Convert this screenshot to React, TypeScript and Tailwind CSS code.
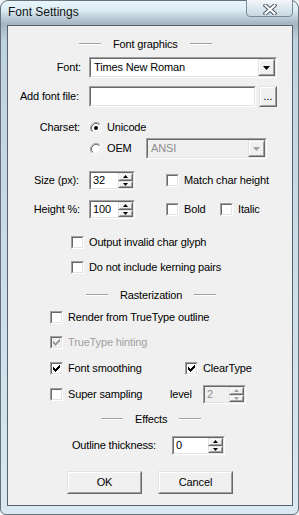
import React from "react";

const FONT = "font-['Liberation_Sans',Arial,sans-serif] text-[11px] tracking-[-0.15px] leading-none text-black";

function Sunken({ className = "", inner = "", children }: { className?: string; inner?: string; children?: React.ReactNode }) {
  return (
    <div className={`border border-t-[#a0a0a0] border-l-[#a0a0a0] border-r-white border-b-white ${className}`}>
      <div className={`h-full w-full border border-t-[#696969] border-l-[#696969] border-r-[#e3e3e3] border-b-[#e3e3e3] ${inner}`}>
        {children}
      </div>
    </div>
  );
}

function Raised({ className = "", inner = "", children }: { className?: string; inner?: string; children?: React.ReactNode }) {
  return (
    <div className={`border border-t-[#e3e3e3] border-l-[#e3e3e3] border-r-[#696969] border-b-[#696969] bg-[#f0f0f0] ${className}`}>
      <div className={`h-full w-full border border-t-white border-l-white border-r-[#a0a0a0] border-b-[#a0a0a0] flex items-center justify-center ${inner}`}>
        {children}
      </div>
    </div>
  );
}

function Down({ w = 7, color = "#000" }: { w?: number; color?: string }) {
  const h = Math.ceil(w / 2);
  return (
    <svg width={w} height={h} viewBox={`0 0 ${w} ${h}`}>
      <polygon points={`0,0 ${w},0 ${w / 2},${h}`} fill={color} />
    </svg>
  );
}
function Up({ w = 5, color = "#000" }: { w?: number; color?: string }) {
  const h = Math.ceil(w / 2);
  return (
    <svg width={w} height={h} viewBox={`0 0 ${w} ${h}`}>
      <polygon points={`0,${h} ${w},${h} ${w / 2},0`} fill={color} />
    </svg>
  );
}

function Combo({ className = "", text, disabled = false }: { className?: string; text: string; disabled?: boolean }) {
  return (
    <Sunken className={`h-[21px] ${className}`} inner={`flex ${disabled ? "bg-[#f0f0f0]" : "bg-white"}`}>
      <div className={`flex-1 flex items-center pl-[3px] ${disabled ? "text-[#8d8d8d]" : ""}`}>{text}</div>
      <Raised className="w-[17px] h-full">
        <Down w={7} color={disabled ? "#a0a0a0" : "#000"} />
      </Raised>
    </Sunken>
  );
}

function Spinner({ className = "", value, disabled = false }: { className?: string; value: string; disabled?: boolean }) {
  const c = disabled ? "#a0a0a0" : "#000";
  return (
    <Sunken className={`h-[19px] ${className}`} inner={`flex ${disabled ? "bg-[#f0f0f0]" : "bg-white"}`}>
      <div className={`flex-1 flex items-center pl-[2px] ${disabled ? "text-[#8d8d8d]" : ""}`}>{value}</div>
      <div className="w-[15px] h-full flex flex-col">
        <Raised className="flex-1 min-h-0">
          <Up w={5} color={c} />
        </Raised>
        <Raised className="flex-1 min-h-0">
          <Down w={5} color={c} />
        </Raised>
      </div>
    </Sunken>
  );
}

const CHECK = [
  "......X",
  ".....XX",
  "X...XXX",
  "XX.XXX.",
  "XXXXX..",
  ".XXX...",
  "..X....",
];

function Check({ color }: { color: string }) {
  const rects: React.ReactNode[] = [];
  CHECK.forEach((row, y) =>
    row.split("").forEach((ch, x) => {
      if (ch === "X") rects.push(<rect key={`${x}-${y}`} x={x} y={y} width={1} height={1} fill={color} />);
    })
  );
  return (
    <svg width={7} height={7} viewBox="0 0 7 7" shapeRendering="crispEdges">
      {rects}
    </svg>
  );
}

function Checkbox({ checked = false, disabled = false, className = "" }: { checked?: boolean; disabled?: boolean; className?: string }) {
  return (
    <Sunken className={`w-[13px] h-[13px] shrink-0 ${className}`} inner={`flex items-center justify-center ${disabled ? "bg-[#f0f0f0]" : "bg-white"}`}>
      {checked && <Check color={disabled ? "#a0a0a0" : "#000"} />}
    </Sunken>
  );
}

function Radio({ checked = false, className = "" }: { checked?: boolean; className?: string }) {
  return (
    <svg width={12} height={12} viewBox="0 0 12 12" className={`shrink-0 ${className}`}>
      <circle cx={6} cy={6} r={5} fill="#fff" />
      <path d="M2.11 9.89 A5.5 5.5 0 0 1 9.89 2.11" stroke="#a0a0a0" strokeWidth={1} fill="none" />
      <path d="M9.89 2.11 A5.5 5.5 0 0 1 2.11 9.89" stroke="#ffffff" strokeWidth={1} fill="none" />
      <path d="M2.82 9.18 A4.5 4.5 0 0 1 9.18 2.82" stroke="#696969" strokeWidth={1} fill="none" />
      <path d="M9.18 2.82 A4.5 4.5 0 0 1 2.82 9.18" stroke="#e3e3e3" strokeWidth={1} fill="none" />
      {checked && <circle cx={6} cy={6} r={2} fill="#000" />}
    </svg>
  );
}

function Header({ ml, text }: { ml: string; text: string }) {
  return (
    <div className={`flex items-center h-[14px] ${ml}`}>
      <div className="w-[22px] h-[2px] border-t border-t-[#a0a0a0] border-b border-b-white" />
      <span className="mx-[12px]">{text}</span>
      <div className="w-[22px] h-[2px] border-t border-t-[#a0a0a0] border-b border-b-white" />
    </div>
  );
}

function CheckRow({ className = "", label, checked = false, disabled = false }: { className?: string; label: string; checked?: boolean; disabled?: boolean }) {
  return (
    <div className={`flex items-center h-[13px] ${className}`}>
      <Checkbox checked={checked} disabled={disabled} />
      <span className={`ml-[5px] ${disabled ? "text-[#a0a0a0]" : ""}`}>{label}</span>
    </div>
  );
}

export default function App() {
  return (
    <div className="w-[299px] h-[515px] overflow-hidden bg-[#eef3f6]">
      <div className="relative w-[299px] h-[515px] rounded-t-[8px] rounded-b-[6px] border border-[#66717c] bg-[linear-gradient(180deg,#e9f5fb_0px,#dcedf6_9px,#bccbd6_17px,#a5b5c1_23px,#bfd2df_40px,#cddfeb_60%,#d9e8f1_100%)] flex flex-col">
        {/* title bar */}
        <div className="h-[24px] flex items-center pl-[7px] pb-[3px]">
          <span className="font-['Liberation_Sans',Arial,sans-serif] text-[12px] text-[#111] leading-none">Font Settings</span>
        </div>
        <div className="absolute top-[-2px] right-[5px] w-[47px] h-[18px] rounded-b-[4px] border border-[#7b8a97] bg-[linear-gradient(180deg,#f2f7fa_0%,#dbe6ee_55%,#c9d7e2_100%)] flex items-center justify-center pt-[2px]">
          <svg width={14} height={11} viewBox="0 0 14 11">
            <path d="M2.5 1.5 L11.5 9.5 M11.5 1.5 L2.5 9.5" stroke="#4d5965" strokeWidth={4.2} strokeLinecap="square" fill="none" />
            <path d="M2.5 1.5 L11.5 9.5 M11.5 1.5 L2.5 9.5" stroke="#ffffff" strokeWidth={2.2} strokeLinecap="square" fill="none" />
          </svg>
        </div>

        {/* client */}
        <div className={`ml-[6px] w-[286px] h-[481px] border border-[#56616b] bg-[#f0f0f0] flex flex-col ${FONT}`}>
          <Header ml="mt-[11px] ml-[71px]" text="Font graphics" />

          <div className="flex items-center mt-[6px] h-[21px]">
            <span className="w-[73px] text-right">Font:</span>
            <Combo className="ml-[8px] w-[188px]" text="Times New Roman" />
          </div>

          <div className="flex items-center mt-[8px] h-[21px]">
            <span className="w-[71px] text-right">Add font file:</span>
            <Sunken className="ml-[10px] w-[167px] h-[21px]" inner="bg-white" />
            <Raised className="ml-[3px] w-[18px] h-[21px]" inner="items-end pb-[3px]">
              <span className="tracking-[0px]">...</span>
            </Raised>
          </div>

          <div className="flex items-center mt-[14px] h-[13px]">
            <span className="w-[72px] text-right">Charset:</span>
            <Radio checked className="ml-[10px]" />
            <span className="ml-[5px]">Unicode</span>
          </div>

          <div className="flex items-center mt-[4px] h-[21px]">
            <Radio className="ml-[82px]" />
            <span className="ml-[5px] w-[39px]">OEM</span>
            <Combo className="w-[121px]" text="ANSI" disabled />
          </div>

          <div className="flex items-center mt-[12px] h-[19px]">
            <span className="w-[71px] text-right">Size (px):</span>
            <Spinner className="ml-[10px] w-[46px]" value="32" />
            <Checkbox className="ml-[31px]" />
            <span className="ml-[5px]">Match char height</span>
          </div>

          <div className="flex items-center mt-[10px] h-[19px]">
            <span className="w-[72px] text-right">Height %:</span>
            <Spinner className="ml-[9px] w-[46px]" value="100" />
            <Checkbox className="ml-[31px]" />
            <span className="ml-[5px] w-[36px]">Bold</span>
            <Checkbox />
            <span className="ml-[5px]">Italic</span>
          </div>

          <CheckRow className="mt-[17px] ml-[63px]" label="Output invalid char glyph" />
          <CheckRow className="mt-[12px] ml-[63px]" label="Do not include kerning pairs" />

          <Header ml="mt-[14px] ml-[78px]" text="Rasterization" />

          <CheckRow className="mt-[9px] ml-[42px]" label="Render from TrueType outline" />
          <CheckRow className="mt-[12px] ml-[42px]" label="TrueType hinting" checked disabled />

          <div className="flex items-center mt-[13px] h-[13px] ml-[42px]">
            <Checkbox checked />
            <span className="ml-[5px] w-[117px]">Font smoothing</span>
            <Checkbox checked />
            <span className="ml-[5px]">ClearType</span>
          </div>

          <div className="flex items-center mt-[10px] h-[19px] ml-[42px]">
            <Checkbox />
            <span className="ml-[5px] w-[102px]">Super sampling</span>
            <span className="w-[33px]">level</span>
            <Spinner className="w-[43px]" value="2" disabled />
          </div>

          <Header ml="mt-[8px] ml-[93px]" text="Effects" />

          <div className="flex items-center mt-[10px] h-[19px]">
            <span className="w-[148px] text-right">Outline thickness:</span>
            <Spinner className="ml-[16px] w-[53px]" value="0" />
          </div>

          <div className="flex items-center mt-[16px] h-[23px]">
            <Raised className="ml-[59px] w-[75px] h-[23px]">OK</Raised>
            <Raised className="ml-[16px] w-[75px] h-[23px]">Cancel</Raised>
          </div>
        </div>
      </div>
    </div>
  );
}
